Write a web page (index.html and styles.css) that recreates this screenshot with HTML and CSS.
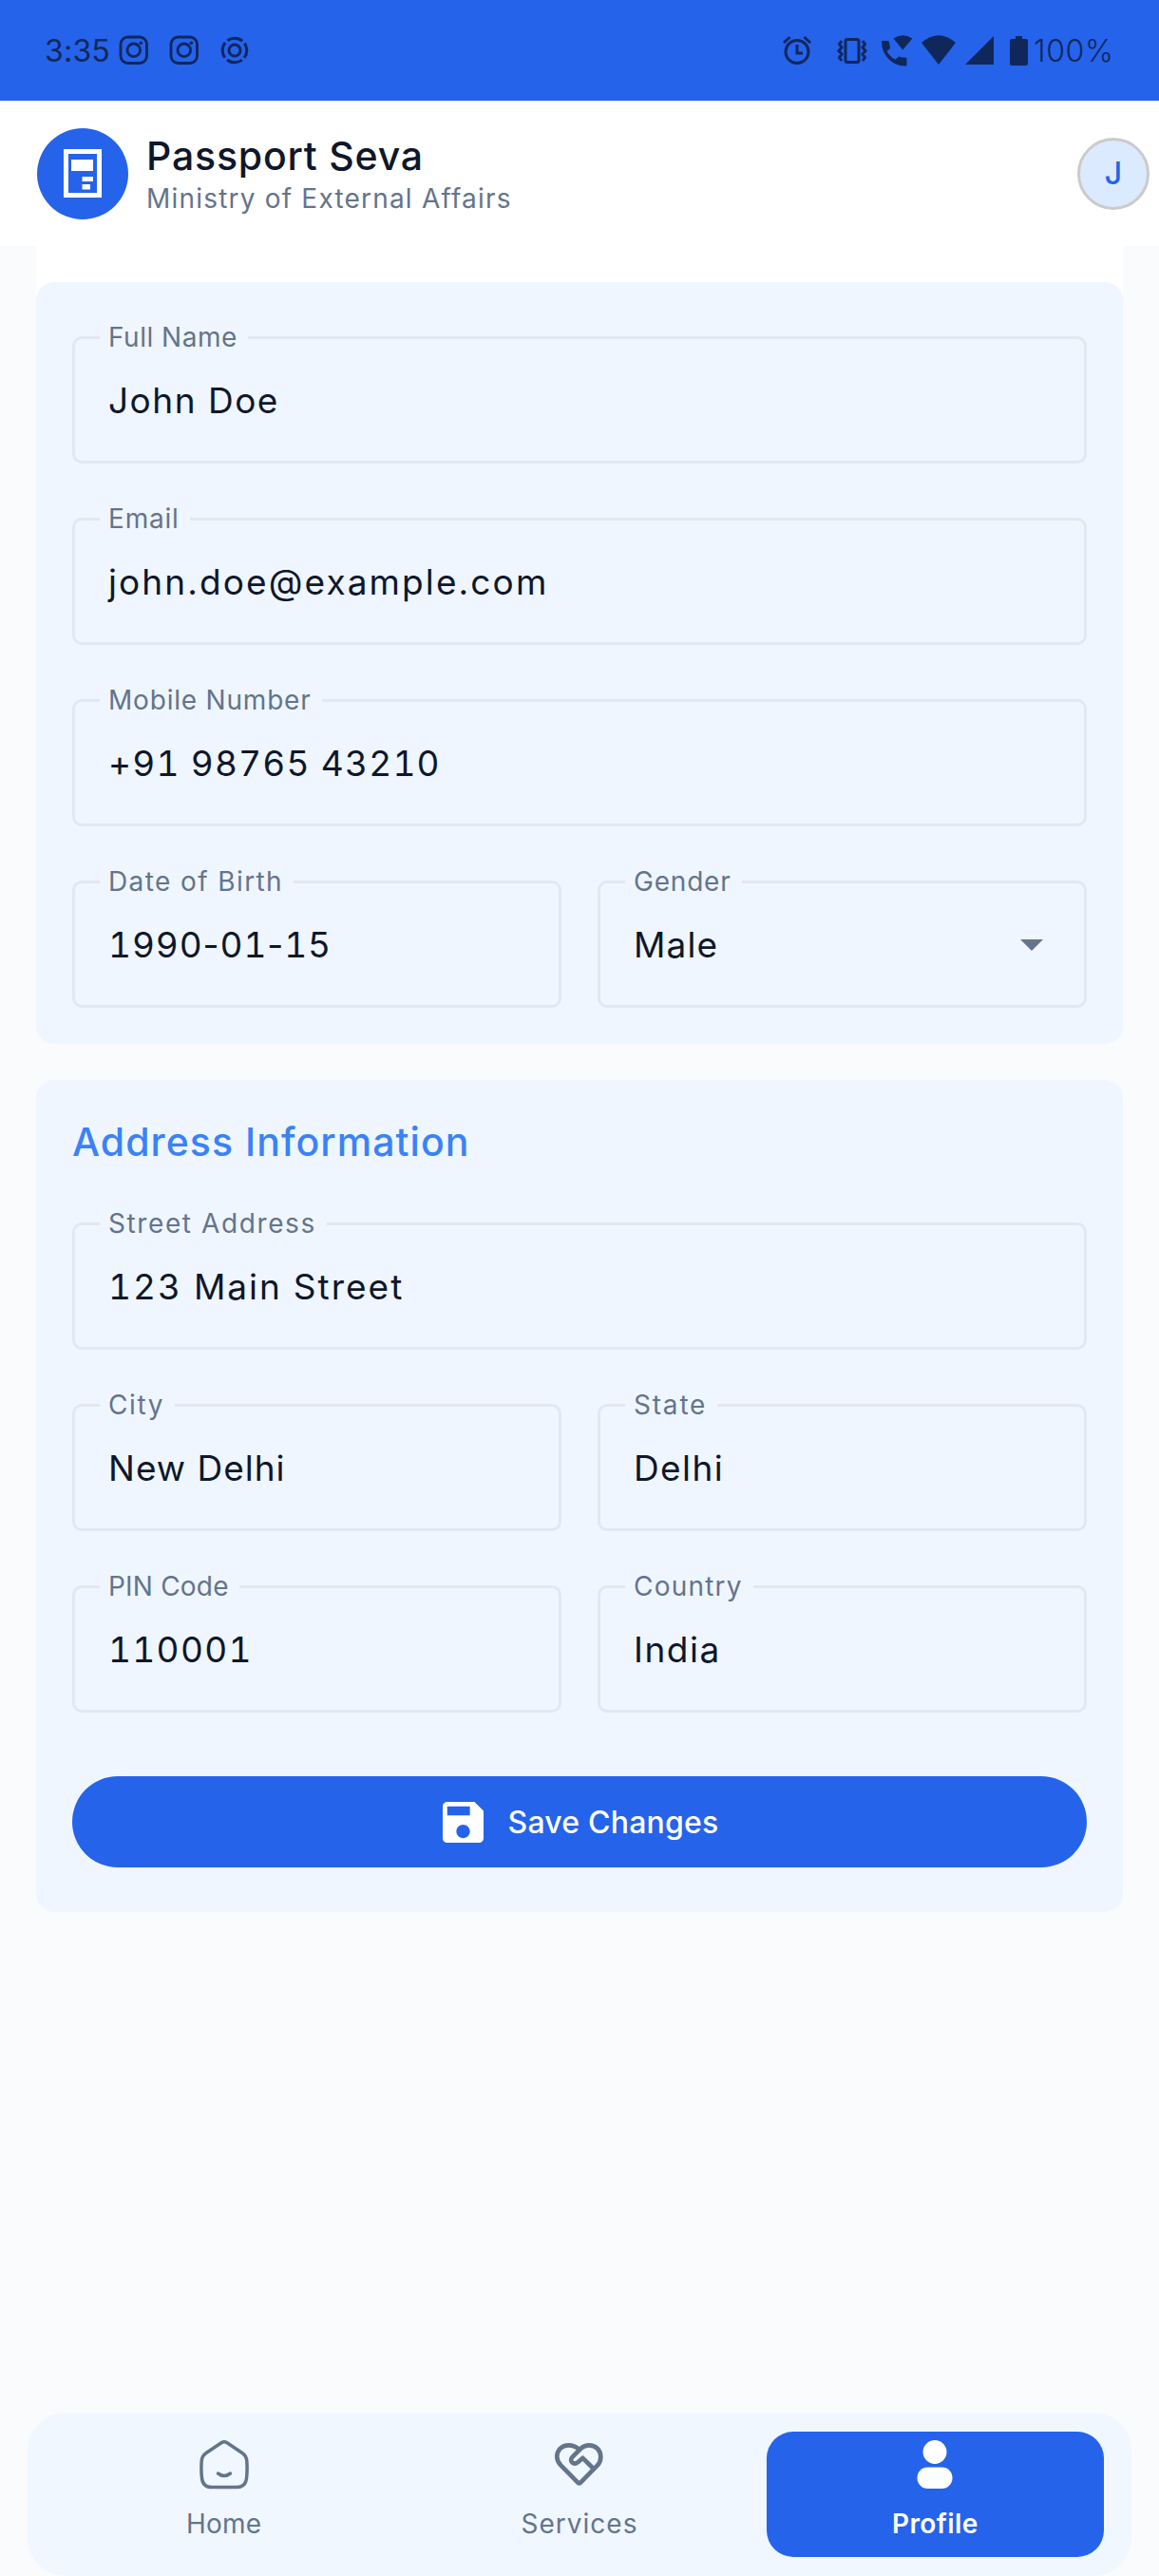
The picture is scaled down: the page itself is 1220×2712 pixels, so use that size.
FILE: index.html
```html
<!DOCTYPE html>
<html lang="en">
<head>
<meta charset="utf-8">
<title>Passport Seva</title>
<link rel="stylesheet" href="styles.css">
</head>
<body>
<div class="status">
  <span class="time">3:35</span>
  <svg class="app-ico" width="32" height="32" viewBox="0 0 32 32" fill="none" stroke="currentColor" stroke-width="2.8"><rect x="2" y="2" width="27.500" height="27.500" rx="7.500"/><circle cx="15.800" cy="15.800" r="6.800"/><circle cx="23.300" cy="8.300" r="1.800" fill="currentColor" stroke="none"/></svg>
  <svg class="app-ico" width="32" height="32" viewBox="0 0 32 32" fill="none" stroke="currentColor" stroke-width="2.8"><rect x="2" y="2" width="27.500" height="27.500" rx="7.500"/><circle cx="15.800" cy="15.800" r="6.800"/><circle cx="23.300" cy="8.300" r="1.800" fill="currentColor" stroke="none"/></svg>
  <svg class="app-ico" width="32" height="32" viewBox="0 0 32 32" fill="none" stroke="currentColor" stroke-width="3"><circle cx="16" cy="16" r="6"/><circle cx="16" cy="16" r="12.800" stroke-dasharray="17 3.106" stroke-dashoffset="8.500"/></svg>
  <span class="spacer"></span>
  <svg class="sys" width="32" height="32" viewBox="0 0 32 32" fill="none" stroke="currentColor" stroke-width="3"><circle cx="16" cy="17.500" r="12"/><path d="M16 10v9h6M2 8l6.500-6M30 8l-6.500-6"/></svg>
  <svg class="sys vib" width="32" height="32" viewBox="0 0 32 32" fill="none" stroke="currentColor" stroke-width="3"><rect x="9" y="4.500" width="14" height="24" rx="2"/><path d="M5 6L2.500 9.500 5 13 2 16.500 5 20 2.500 23.500 5 27M27 6l2.500 3.500L27 13l3 3.500L27 20l2.500 3.500L27 27"/></svg>
  <svg class="sys call" width="34" height="36" viewBox="0 0 34 36" fill="currentColor"><path d="M1 8.500Q1 8 2 8H7.500Q9 8 9 9.500Q9.200 12.500 10 14.500Q10.300 15.500 9.600 16.200L6.500 19Q10 25 15.600 27.800L18.500 25Q19.200 24.300 20.200 24.700Q23 25.500 26 25.600Q27.500 25.700 27.500 27V33Q27.500 34.500 26 34.500C12 34.500 1 23 1 8.500ZM13.500 5.500Q23.500-1 33.300 5.500L23.300 17.500Z"/></svg>
  <svg class="sys wifi" width="36" height="32" viewBox="0 0 36 32" fill="currentColor"><path d="M0 8Q18-7.500 36 8L18 31Z"/></svg>
  <svg class="sys cell" width="30" height="30" viewBox="0 0 30 30" fill="currentColor"><path d="M30 0V30H0Z"/></svg>
  <svg class="sys batt" width="19" height="32" viewBox="0 0 19 32" fill="currentColor"><path d="M6 1H13V4H17Q19 4 19 6V30Q19 32 17 32H2Q0 32 0 30V6Q0 4 2 4H6Z"/></svg>
  <span class="pct">100%</span>
</div>
<header class="top">
  <div class="logo"><svg width="40" height="52" viewBox="0 0 40 52"><path fill="none" stroke="#fff" stroke-width="5" d="M2.500 2.500H37.500V48.500H2.500Z"/><path fill="#fff" d="M8 11H31V23H8ZM19.500 29H31V34H19.500ZM19.500 37H28V42.500H19.500Z"/></svg></div>
  <div class="brand">
    <div class="title"><span>Passport Seva</span></div>
    <div class="sub"><span>Ministry of External Affairs</span></div>
  </div>
  <div class="avatar">J</div>
</header>
<main>
  <div class="sheet">
    <section class="card">
      <div class="field"><label class="l-name">Full Name</label><span class="v-name">John Doe</span></div>
      <div class="field"><label class="l-email">Email</label><span class="v-email">john.doe@example.com</span></div>
      <div class="field"><label class="l-mob">Mobile Number</label><span class="v-mob">+91 98765 43210</span></div>
      <div class="row">
        <div class="field"><label class="l-dob">Date of Birth</label><span class="v-dob">1990<span class="dash">-</span>01<span class="dash">-</span>15</span></div>
        <div class="field"><label class="l-gen">Gender</label><span class="v-gen">Male</span><i class="caret"></i></div>
      </div>
    </section>
  </div>
  <section class="card address">
    <h2>Address Information</h2>
    <div class="field"><label class="l-street">Street Address</label><span class="v-street">123 Main Street</span></div>
    <div class="row">
      <div class="field"><label class="l-city">City</label><span class="v-city">New Delhi</span></div>
      <div class="field"><label class="l-state">State</label><span class="v-state">Delhi</span></div>
    </div>
    <div class="row">
      <div class="field"><label class="l-pin">PIN Code</label><span class="v-pin">110001</span></div>
      <div class="field"><label class="l-country">Country</label><span class="v-country">India</span></div>
    </div>
    <button class="save"><svg width="43" height="43" viewBox="3 3 18 18" fill="#fff"><path d="M17 3H5C3.890 3 3 3.900 3 5V19C3 20.100 3.890 21 5 21H19C20.100 21 21 20.100 21 19V7L17 3ZM12 19C10.340 19 9 17.660 9 16S10.340 13 12 13 15 14.340 15 16 13.660 19 12 19ZM15 9H5V5H15V9Z"/></svg><span>Save Changes</span></button>
  </section>
</main>
<nav>
  <a class="item"><svg width="56" height="56" viewBox="0 0 56 56" fill="none" stroke="currentColor" stroke-width="3.500" stroke-linecap="round"><path d="M25 4.700Q28 2.700 31 4.700L47 15.500Q51.500 18.500 51.800 24Q52.500 34 51.500 42Q50.500 51.500 41 51.500H15Q5.500 51.500 4.500 42Q3.500 34 4.200 24Q4.500 18.500 9 15.500Z"/><path d="M21.500 37Q28 42 34.500 37"/></svg><span class="n-home">Home</span></a>
  <a class="item"><svg width="56" height="56" viewBox="0 0 56 56" fill="none" stroke="currentColor" stroke-width="4.700" stroke-linecap="round" stroke-linejoin="round"><path d="M27.700 11.500C24 8.500 20 7.300 16.600 7.300C9 7.300 4.300 13 4.300 19.500C4.300 23.500 6 26 8.300 28.300L26.500 46.800Q27.700 48 28.900 46.800L47 28.300C49.300 26 50.300 23 50.300 19.500C50.300 12.500 45 7.300 38 7.300C34.500 7.300 32 8.500 29.700 10.500L20.600 19.600C18.600 21.700 18.700 24 20.300 25.500C22 27 24.300 26.900 26.300 25.200L31.500 20.800L42.700 32"/></svg><span class="n-serv">Services</span></a>
  <a class="item active"><svg width="56" height="56" viewBox="0 0 56 56" fill="currentColor"><circle cx="28" cy="14.500" r="12.500"/><rect x="9.500" y="30.500" width="37" height="22.500" rx="11"/></svg><span class="n-prof">Profile</span></a>
</nav>
</body>
</html>
```
FILE: styles.css
```css
* { box-sizing: border-box; }
body { margin: 0; width: 1220px; height: 2712px; display: flex; flex-direction: column; background: #f9fbfd; font-family: "Inter", "Liberation Sans", sans-serif; color: #0f172a; overflow: hidden; }
svg { display: block; flex: none; }
span, label, h2 { white-space: nowrap; }

.status { height: 106px; flex: none; background: #2563eb; color: #10275c; display: flex; align-items: center; padding: 0 47px; font-size: 32px; }
.time { width: 78px; letter-spacing: .2px; }
.app-ico { margin-right: 21px; }
.spacer { flex: 1; }
.vib { margin-left: 26px; }
.call { margin-left: 14px; }
.wifi { margin-left: 9px; }
.cell { margin-left: 10px; }
.batt { margin-left: 17px; margin-right: 6px; }
.pct { width: 85px; font-weight: 300; letter-spacing: .6px; }

.top { height: 153px; flex: none; background: #fff; display: flex; align-items: center; padding: 0 10px 0 39px; }
.logo { width: 96px; height: 96px; border-radius: 50%; background: #2563eb; display: grid; place-items: center; }
.brand { margin-left: 19px; flex: 1; padding-top: 3px; }
.title { font-size: 41px; line-height: 50px; font-weight: 500; letter-spacing: .8px; }
.sub { font-size: 28px; line-height: 40px; color: #64748b; letter-spacing: 1.2px; }
.avatar { width: 76px; height: 76px; border-radius: 50%; border: 3px solid #cbcbcb; background: #dbeafe; color: #2563eb; font-size: 32px; font-weight: 500; display: grid; place-items: center; }

main { flex: 1; padding: 0 38px; }
.sheet { background: #fff linear-gradient(#f9fbfd, #f9fbfd) bottom / 100% 40px no-repeat; padding-top: 38px; }
.card { background: #eff6ff; border-radius: 19px; padding: 57px 38px 38px; display: flex; flex-direction: column; gap: 57px; }
.row { display: grid; grid-template-columns: 1fr 1fr; gap: 38px; }
.field { position: relative; height: 134px; border: 3px solid #e2e8f0; border-radius: 10px; padding: 0 35px; display: flex; align-items: center; font-size: 37px; }
.field label { position: absolute; left: 26px; top: -21px; padding: 0 11px 0 9px; background: #eff6ff; color: #64748b; font-size: 28px; line-height: 38px; }
.caret { margin-left: auto; border: solid transparent; border-width: 12px 12px 0; border-top-color: #64748b; margin-right: 8px; position: relative; top: 1px; }
.address { margin-top: 38px; height: 876px; padding-top: 38px; }
h2 { margin: 0; font-size: 41px; line-height: 55px; font-weight: 500; color: #3b82f6; letter-spacing: 1.05px; }
.save { margin-top: 10px; height: 96px; flex: none; border: 0; border-radius: 48px; background: #2563eb; color: #fff; font: 500 32px "Inter", sans-serif; letter-spacing: .2px; display: flex; align-items: center; justify-content: center; gap: 26px; padding-left: 8px; }

.l-name { letter-spacing: .5px; }
.v-name { letter-spacing: 1.5px; }
.l-email { letter-spacing: .8px; }
.v-email { letter-spacing: 2.1px; }
.l-mob { letter-spacing: .8px; }
.v-mob { letter-spacing: 1.2px; font-variant-numeric: tabular-nums; }
.l-dob { letter-spacing: 1.4px; }
.v-dob { letter-spacing: .9px; font-variant-numeric: tabular-nums; }
.dash { font-variant-numeric: normal; }
.l-gen { letter-spacing: .8px; }
.v-gen { letter-spacing: 1.1px; }
.l-street { letter-spacing: 1.6px; }
.v-street { letter-spacing: 2px; font-variant-numeric: tabular-nums; }
.l-city { letter-spacing: 1.6px; }
.v-city { letter-spacing: 1px; }
.l-state { letter-spacing: 1.8px; }
.v-state { letter-spacing: 1.4px; }
.l-pin { letter-spacing: .2px; }
.v-pin { letter-spacing: 1.3px; font-variant-numeric: tabular-nums; }
.l-country { letter-spacing: 1.2px; }
.v-country { letter-spacing: 1.5px; }
.n-home { letter-spacing: .2px; }
.n-serv { letter-spacing: 1px; }
.n-prof { letter-spacing: .4px; }

nav { height: 172px; flex: none; margin: 0 29px; padding: 20px 29px; background: #f0f7ff; border-radius: 40px; display: grid; grid-template-columns: repeat(3, 1fr); gap: 19px; }
.item { border-radius: 28px; display: flex; flex-direction: column; align-items: center; padding-top: 7px; color: #64748b; font-size: 28px; }
.item span { margin-top: 17px; line-height: 34px; }
.active { background: #2563eb; color: #fff; font-weight: 600; }
```
